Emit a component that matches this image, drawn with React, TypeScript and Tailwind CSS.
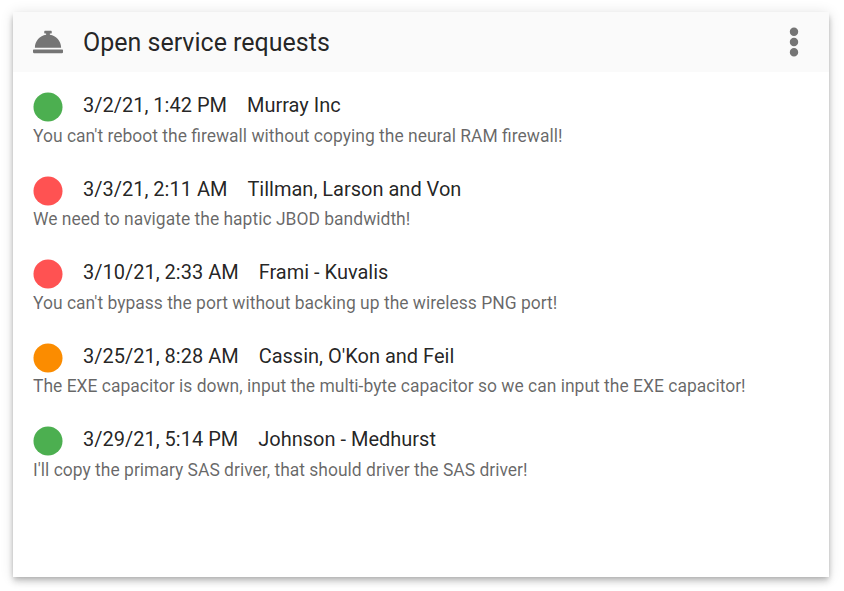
import { FaConciergeBell, FaEllipsisV } from 'react-icons/fa'

interface ServiceRequest {
  readonly date: string
  readonly customer: string
  readonly description: string
  readonly color: string
}

const requests: ServiceRequest[] = [
  {
    date: '3/2/21, 1:42 PM',
    customer: 'Murray Inc',
    description: "You can't reboot the firewall without copying the neural RAM firewall!",
    color: 'text-[#4caf50]',
  },
  {
    date: '3/3/21, 2:11 AM',
    customer: 'Tillman, Larson and Von',
    description: 'We need to navigate the haptic JBOD bandwidth!',
    color: 'text-[#ff5252]',
  },
  {
    date: '3/10/21, 2:33 AM',
    customer: 'Frami - Kuvalis',
    description: "You can't bypass the port without backing up the wireless PNG port!",
    color: 'text-[#ff5252]',
  },
  {
    date: '3/25/21, 8:28 AM',
    customer: "Cassin, O'Kon and Feil",
    description: 'The EXE capacitor is down, input the multi-byte capacitor so we can input the EXE capacitor!',
    color: 'text-[#fb8c00]',
  },
  {
    date: '3/29/21, 5:14 PM',
    customer: 'Johnson - Medhurst',
    description: "I'll copy the primary SAS driver, that should driver the SAS driver!",
    color: 'text-[#4caf50]',
  },
]

function StatusDot({ color }: { readonly color: string }) {
  return (
    <svg viewBox="0 0 512 512" className={`mt-[3.9px] h-[30px] w-[30px] shrink-0 fill-current ${color}`}>
      <circle cx="256" cy="256" r="248" />
    </svg>
  )
}

function RequestItem({ request }: { readonly request: ServiceRequest }) {
  return (
    <li className="h-[83.5px]">
      <div className="flex h-[30px] items-center text-[20px] leading-[30px] text-black/87">
        <StatusDot color={request.color} />
        <span className="ml-5">{request.date}</span>
        <span className="ml-5">{request.customer}</span>
      </div>
      <p className="mt-[0.4px] h-[30px] text-[17.49px] leading-[31px] text-black/60">{request.description}</p>
    </li>
  )
}

export default function App() {
  return (
    <main className="h-[591px] bg-white px-[13px] pt-3 font-['Roboto',sans-serif]">
      <section className="h-[565px] w-[816px] bg-white shadow-[0_2.5px_5px_-1.25px_rgba(0,0,0,0.2),0_5px_6.25px_rgba(0,0,0,0.14),0_1.25px_12.5px_rgba(0,0,0,0.12)]">
        <header className="flex h-[60px] items-center bg-[#fafafa] px-5">
          <FaConciergeBell className="h-[30px] w-[30px] text-[#757575]" />
          <h1 className="ml-5 flex-1 pt-0.5 text-[25px] text-black/87">Open service requests</h1>
          <button type="button" aria-label="More" className="flex w-[30px] justify-center">
            <FaEllipsisV className="h-[30px] w-[30px] text-[#757575]" />
          </button>
        </header>

        <ul className="px-5 pt-[18.3px]">
          {requests.map((request) => (
            <RequestItem key={request.date} request={request} />
          ))}
        </ul>
      </section>
    </main>
  )
}
